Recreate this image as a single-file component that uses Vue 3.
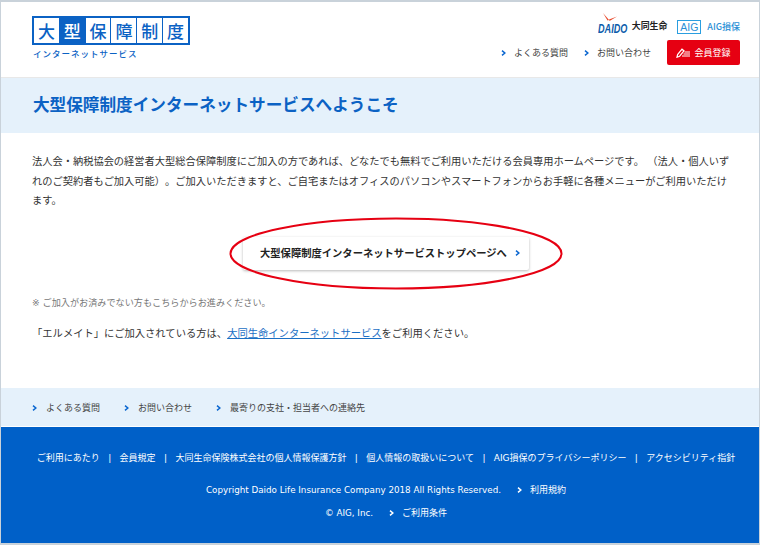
<script setup>
const logoChars = ['大', '型', '保', '障', '制', '度']
const footerLinks = ['ご利用にあたり', '会員規定', '大同生命保険株式会社の個人情報保護方針', '個人情報の取扱いについて', 'AIG損保のプライバシーポリシー', 'アクセシビリティ指針']
const subLinks = ['よくある質問', 'お問い合わせ', '最寄りの支社・担当者への連絡先']
</script>

<template>
  <div class="frame">
    <header class="header">
      <div class="brand">
        <div class="logo">
          <span v-for="(c, i) in logoChars" :key="c" class="cell" :class="{ on: i === 1 }">{{ c }}</span>
        </div>
        <div class="logo-sub">インターネットサービス</div>
      </div>
      <div class="head-right">
        <div class="partners">
          <div class="daido">
            <svg class="rays" width="30" height="12" viewBox="0 0 30 12">
              <path d="M5 0 L11 7 L9.5 7.5 Z" fill="#e8482a" />
              <path d="M11 6.5 L19 3.5 L11.5 8 Z" fill="#e8482a" />
            </svg>
            <span class="daido-text">DAIDO</span>
          </div>
          <span class="daido-jp">大同生命</span>
          <span class="aig-box">AIG</span>
          <span class="aig-jp">AIG損保</span>
        </div>
        <div class="head-nav">
          <a class="arrow-link"><svg class="chev" width="5" height="6" viewBox="0 0 5 6"><path d="M1 .7 L3.8 3 L1 5.3" /></svg>よくある質問</a>
          <a class="arrow-link"><svg class="chev" width="5" height="6" viewBox="0 0 5 6"><path d="M1 .7 L3.8 3 L1 5.3" /></svg>お問い合わせ</a>
          <a class="register">
            <svg width="15" height="10" viewBox="0 0 15 10">
              <path d="M1 9.2 L1.6 6.6 L6 1.2 L8 2.8 L3.6 8.2 Z" fill="none" stroke="#fff" stroke-width="1.2" />
              <path d="M8.5 4 H14 M7.5 6 H14 M6 8 H14" stroke="#fff" stroke-width="1" />
            </svg>
            会員登録
          </a>
        </div>
      </div>
    </header>

    <section class="hero">
      <h1>大型保障制度インターネットサービスへようこそ</h1>
    </section>

    <main class="main">
      <p class="lead">法人会・納税協会の経営者大型総合保障制度にご加入の方であれば、どなたでも無料でご利用いただける会員専用ホームページです。 （法人・個人いずれのご契約者もご加入可能）。ご加入いただきますと、ご自宅またはオフィスのパソコンやスマートフォンからお手軽に各種メニューがご利用いただけます。</p>
      <div class="cta-wrap">
        <a class="cta">大型保障制度インターネットサービストップページへ<svg class="chev" width="5" height="6" viewBox="0 0 5 6"><path d="M1 .7 L3.8 3 L1 5.3" /></svg></a>
        <svg class="ring" width="334" height="73" viewBox="0 0 334 73">
          <ellipse cx="167" cy="36.5" rx="165.5" ry="35" fill="none" stroke="#e60012" stroke-width="2" />
        </svg>
      </div>
      <p class="note">※ ご加入がお済みでない方もこちらからお進みください。</p>
      <p class="elmate">「エルメイト」にご加入されている方は、<a>大同生命インターネットサービス</a>をご利用ください。</p>
    </main>

    <nav class="subnav">
      <a v-for="l in subLinks" :key="l" class="arrow-link"><svg class="chev" width="5" height="6" viewBox="0 0 5 6"><path d="M1 .7 L3.8 3 L1 5.3" /></svg>{{ l }}</a>
    </nav>

    <footer class="footer">
      <div class="foot-links">
        <template v-for="(l, i) in footerLinks" :key="l">
          <span v-if="i" class="sep">|</span>
          <a>{{ l }}</a>
        </template>
      </div>
      <div class="copy">
        <span>Copyright Daido Life Insurance Company 2018 All Rights Reserved.</span>
        <a><svg class="chev white" width="5" height="6" viewBox="0 0 5 6"><path d="M1 .7 L3.8 3 L1 5.3" /></svg>利用規約</a>
      </div>
      <div class="copy second">
        <span>© AIG, Inc.</span>
        <a><svg class="chev white" width="5" height="6" viewBox="0 0 5 6"><path d="M1 .7 L3.8 3 L1 5.3" /></svg>ご利用条件</a>
      </div>
    </footer>
  </div>
</template>

<style scoped>
.frame {
  width: 760px;
  height: 545px;
  box-sizing: border-box;
  border: 1px solid #c9d2da;
  border-width: 2px 1px;
  background: #fff;
  display: flex;
  flex-direction: column;
  overflow: hidden;
  font-family: "DejaVu Sans", "Noto Sans CJK JP", sans-serif;
  color: #333;
  text-spacing-trim: space-all;
}
a { text-decoration: none; }
.header {
  height: 76px;
  flex: none;
  box-sizing: border-box;
  display: flex;
  justify-content: space-between;
  padding: 14px 19px 0 31px;
  border-bottom: 1px solid #e8e8e8;
}
.logo {
  display: flex;
  gap: 1px;
  width: 158px;
  height: 29px;
  box-sizing: border-box;
  border: 2px solid #0b62c4;
  background: #0b62c4;
}
.cell {
  flex: 1;
  display: flex;
  align-items: center;
  justify-content: center;
  background: #fff;
  color: #0b62c4;
  font: 500 17px/1 "Noto Sans CJK JP", sans-serif;
}
.cell.on { background: #0b62c4; color: #fff; }
.logo-sub {
  margin: 2px 0 0 1px;
  color: #0b62c4;
  font: 500 8.5px/12px "Noto Sans CJK JP", sans-serif;
  letter-spacing: 1px;
}
.head-right {
  display: flex;
  flex-direction: column;
  align-items: flex-end;
}
.partners {
  display: flex;
  align-items: center;
  height: 22px;
  margin-top: -3px;
}
.daido {
  position: relative;
  width: 30px;
  height: 22px;
  margin-right: 4px;
}
.rays {
  position: absolute;
  left: 0;
  top: 0;
}
.daido-text {
  position: absolute;
  left: 0;
  top: 9px;
  font: italic 700 13px/13px "Liberation Sans", sans-serif;
  color: #0b5cab;
  transform: scaleX(.7);
  transform-origin: left center;
}
.daido-jp {
  font: 700 8.9px/1 "Noto Sans CJK JP", sans-serif;
  color: #222;
  margin: 5px 10px 0 0;
}
.aig-box {
  width: 24px;
  height: 14px;
  box-sizing: border-box;
  border: 1px solid #2a9ee0;
  color: #2a8fd6;
  font: 400 10.5px/12px "Liberation Sans", sans-serif;
  text-align: center;
  margin: 5px 6px 0 0;
}
.aig-jp {
  font: 500 9px/1 "Noto Sans CJK JP", sans-serif;
  color: #2a8fd6;
  margin-top: 5px;
}
.head-nav {
  display: flex;
  align-items: center;
  margin-top: 5px;
}
.arrow-link {
  display: inline-flex;
  align-items: center;
  color: #444;
  font-size: 9px;
  line-height: 14px;
}
.head-nav .arrow-link { margin-right: 16px; }
.chev {
  flex: none;
  margin-right: 8px;
  fill: none;
  stroke: #0a66d0;
  stroke-width: 1.5;
}
.chev.white { stroke: #fff; }
.register {
  width: 73px;
  height: 25px;
  border-radius: 2px;
  background: #e60012;
  color: #fff;
  font-size: 9px;
  display: flex;
  align-items: center;
  justify-content: center;
  gap: 3px;
}
.hero {
  height: 55px;
  flex: none;
  display: flex;
  align-items: center;
  padding: 0 0 3px 32px;
  box-sizing: border-box;
  background: #e5f1fb;
}
.hero h1 {
  margin: 0;
  color: #0b62c4;
  font: 700 16.64px/1 "Noto Sans CJK JP", sans-serif;
}
.main {
  flex: 1;
  padding: 19px 24px 0 31px;
}
.lead {
  margin: 0;
  font-size: 10.24px;
  line-height: 19.5px;
  color: #333;
}
.cta-wrap {
  position: relative;
  width: 334px;
  height: 73px;
  margin: 6px 0 0 197px;
  box-sizing: border-box;
  padding-left: 14px;
  display: flex;
  align-items: center;
}
.cta {
  width: 286px;
  height: 33px;
  box-sizing: border-box;
  display: flex;
  align-items: center;
  justify-content: space-between;
  padding-left: 17px;
  background: #fff;
  border-radius: 2px;
  box-shadow: 0 1px 3px rgba(0, 0, 0, .28);
  color: #222;
  font: 700 10.3px/1 "Noto Sans CJK JP", sans-serif;
}
.cta .chev { margin-right: 9px; }
.ring {
  position: absolute;
  left: 0;
  top: 0;
  pointer-events: none;
}
.note {
  margin: 6px 0 0;
  font-size: 9.13px;
  line-height: 14px;
  color: #777;
}
.elmate {
  margin: 15px 0 0;
  font-size: 10.3px;
  line-height: 16px;
  color: #333;
}
.elmate a {
  color: #1a6fc4;
  text-decoration: underline;
}
.subnav {
  height: 39px;
  flex: none;
  box-sizing: border-box;
  display: flex;
  align-items: center;
  gap: 24px;
  padding: 1px 0 0 31px;
  background: #e5f1fb;
  border-bottom: 1px solid #fff;
}
.subnav .chev { margin-right: 9px; }
.footer {
  height: 116px;
  flex: none;
  box-sizing: border-box;
  padding-top: 24px;
  background: #0060c8;
  color: #fff;
  font-size: 9px;
}
.foot-links {
  display: flex;
  justify-content: center;
  line-height: 14px;
  padding-left: 12px;
  white-space: nowrap;
}
.sep { margin: 0 8.4px; }
.copy {
  display: flex;
  justify-content: center;
  align-items: center;
  line-height: 14px;
  margin-top: 18px;
  padding-left: 12px;
  gap: 16px;
}
.copy span { font-size: 8.75px; }
.copy a { display: inline-flex; align-items: center; }
.copy.second { margin-top: 9px; }
</style>
